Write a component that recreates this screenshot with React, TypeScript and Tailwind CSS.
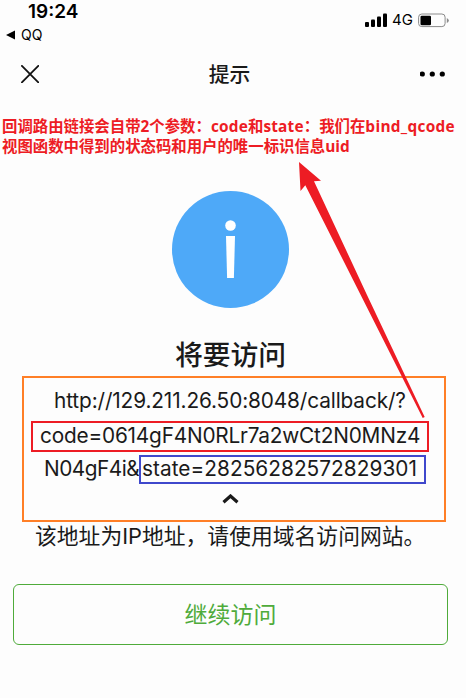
import React from "react";

const sans = "font-['Inter','Noto_Sans_CJK_SC',sans-serif]";

function StatusBar() {
  return (
    <div className="flex h-[46px] justify-between text-black">
      <div className="w-[100px]">
        <div className="pl-[28px] pt-[2px] text-[19px] font-semibold leading-[20px] whitespace-nowrap">19:24</div>
        <div className="flex items-center pl-[6px] pt-[3px] text-[14px] leading-[20px]">
          <svg width="10" height="10" viewBox="0 0 10 10"><path d="M0 5 9 .5v9z" /></svg>
          <span className="pl-[5px]">QQ</span>
        </div>
      </div>
      <div className="flex h-[20px] items-center pt-[20px] pr-[16px]">
        <svg width="22" height="15" viewBox="0 0 22 15">
          <rect x="0" y="9" width="4" height="5" rx="1" />
          <rect x="6" y="6.5" width="4" height="7.5" rx="1" />
          <rect x="12" y="3.5" width="4" height="10.5" rx="1" />
          <rect x="18" y="0.5" width="4" height="13.5" rx="1" />
        </svg>
        <span className="w-[31px] pl-[5px] text-[15px] leading-[16px] whitespace-nowrap">4G</span>
        <svg width="32" height="15" viewBox="0 0 32 15">
          <rect x="0.6" y="1" width="26.5" height="12.6" rx="3.2" fill="none" stroke="#8b8b8b" />
          <rect x="2.5" y="2.7" width="10.5" height="9.5" rx="1.3" />
          <path d="M28.8 5v5q2-1 2-2.5T28.8 5z" fill="#8b8b8b" />
        </svg>
      </div>
    </div>
  );
}

function NavBar() {
  return (
    <div className="flex h-[56px] items-center justify-between pl-[21px] pr-[21px] text-[#1a1a1a]">
      <svg width="18" height="18" viewBox="0 0 18 18" stroke="#111" strokeWidth="1.8" strokeLinecap="round">
        <path d="M.9.9l16.4 16.4M17.3.9.9 17.3" />
      </svg>
      <span className="pt-px text-[20.8px] font-medium leading-[28px]">提示</span>
      <svg width="25" height="6" viewBox="0 0 25 6">
        <circle cx="2.3" cy="3" r="2.6" /><circle cx="12.3" cy="3" r="2.6" /><circle cx="22.3" cy="3" r="2.6" />
      </svg>
    </div>
  );
}

export default function App() {
  return (
    <div className={`relative h-[698px] w-[466px] overflow-hidden bg-[#fdfdfd] ${sans}`}>
      <StatusBar />
      <NavBar />

      <div className="mt-[15px] h-[74px] pl-[2px] text-[15.4px] font-bold leading-[20px] text-[#ed1c24] whitespace-nowrap font-['Open_Sans','Noto_Sans_CJK_SC',sans-serif]">
        <div>回调路由链接会自带2个参数：<span className="tracking-[0.2px]">code</span>和<span className="tracking-[0.2px]">state</span>：我们在<span className="tracking-[0.3px]">bind_qcode</span></div>
        <div>视图函数中得到的状态码和用户的唯一标识信息uid</div>
      </div>

      <div className="flex w-[461px] flex-col items-center text-[#1a1a1a]">
        <svg width="117" height="117" viewBox="0 0 117 117">
          <circle cx="58.5" cy="58.5" r="58.5" fill="#4ea9f8" />
          <circle cx="58.5" cy="34.5" r="5.3" fill="#fff" />
          <path d="M54 45h9l-1.1 42H55.1z" fill="#fff" />
        </svg>
        <h1 className="mt-[28px] h-[40px] text-[27.8px] font-medium leading-[38px]">将要访问</h1>
      </div>

      <div className="ml-[22px] h-[146px] w-[424px] border-2 border-[#ff7f27] text-[20.8px] leading-[30px] text-[#1a1a1a] whitespace-nowrap">
        <div className="mt-[8px] h-[30px] pl-[30px] tracking-[-0.12px]">http://129.211.26.50:8048/callback/?</div>
        <div className="ml-[7px] mt-[5px] h-[31px] w-[398px] border-2 border-[#ed1c24] pl-[7px] leading-[25px] tracking-[-0.2px]">code=0614gF4N0RLr7a2wCt2N0MNz4</div>
        <div className="mt-[3px] flex h-[29px]">
          <span className="w-[115px] pl-[20px] leading-[28px] tracking-[-0.5px]">N04gF4i&amp;</span>
          <span className="h-[29px] w-[287px] border-2 border-[#3f48cc] pl-[1px] leading-[24px] tracking-[0.04px]">state=28256282572829301</span>
        </div>
        <svg className="ml-[198px] mt-[10px]" width="17" height="10" viewBox="0 0 17 10" fill="none" stroke="#1a1a1a" strokeWidth="3.2">
          <path d="M1.5 8.2 8.5 2l7 6.2" />
        </svg>
      </div>

      <p className="h-[62px] pl-[35px] text-[21.8px] leading-[28px] text-[#1a1a1a] whitespace-nowrap">该地址为IP地址，请使用域名访问网站。</p>
      <button className="ml-[13px] block h-[61px] w-[435px] rounded-[6px] border border-[#4fab3b] pt-[2px] text-[23px] text-[#4fab3b]">继续访问</button>

      <svg className="pointer-events-none absolute left-0 top-0" width="466" height="698" viewBox="0 0 466 698">
        <path d="M299 162l22 18.8-7 .4L367 295 424.7 417l-2 1L360.7 295 305.3 185.3l-4.8 5.7z" fill="#ed1c24" />
      </svg>
    </div>
  );
}
